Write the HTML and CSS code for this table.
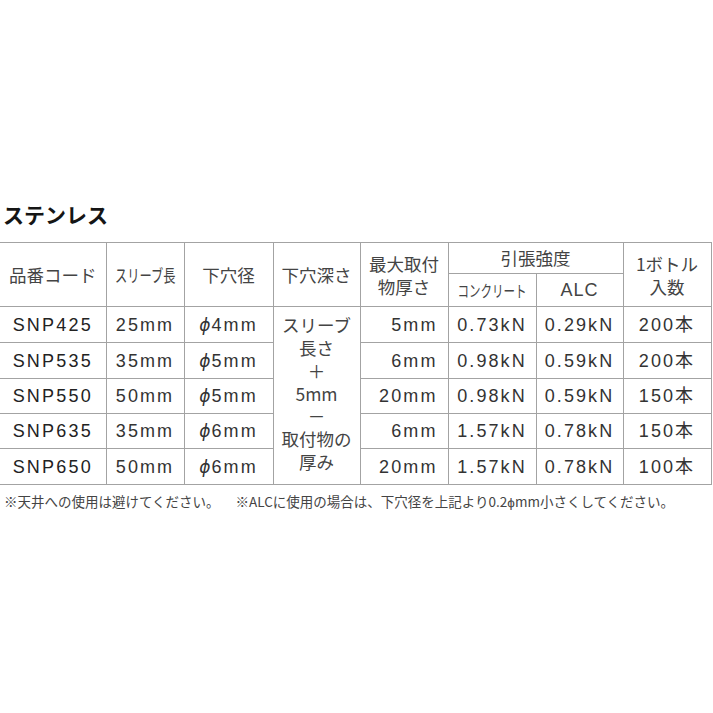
FILE: index.html
```html
<!DOCTYPE html>
<html lang="ja">
<head>
<meta charset="utf-8">
<link rel="stylesheet" href="styles.css">
</head>
<body>
<div class="page">
  <h1 class="title">ステンレス</h1>
  <table class="spec">
    <colgroup>
      <col class="c1"><col class="c2"><col class="c3"><col class="c4"><col class="c5"><col class="c6"><col class="c7"><col class="c8">
    </colgroup>
    <thead>
      <tr class="h1">
        <th rowspan="2" class="first">品番コード</th>
        <th rowspan="2"><span class="narrow">スリーブ長</span></th>
        <th rowspan="2">下穴径</th>
        <th rowspan="2">下穴深さ</th>
        <th rowspan="2" class="two">最大取付<br>物厚さ</th>
        <th colspan="2">引張強度</th>
        <th rowspan="2" class="two">1ボトル<br>入数</th>
      </tr>
      <tr class="h2">
        <th class="sub"><span class="narrow">コンクリート</span></th>
        <th class="sub latin">ALC</th>
      </tr>
    </thead>
    <tbody>
      <tr class="r1">
        <td class="first code">SNP425</td>
        <td>25mm</td>
        <td><span class="phi">ϕ</span>4mm</td>
        <td rowspan="5" class="depth">スリーブ<br>長さ<br>＋<br>5mm<br>－<br>取付物の<br>厚み</td>
        <td class="right">5mm</td>
        <td>0.73kN</td>
        <td>0.29kN</td>
        <td>200本</td>
      </tr>
      <tr class="r2">
        <td class="first code">SNP535</td>
        <td>35mm</td>
        <td><span class="phi">ϕ</span>5mm</td>
        <td class="right">6mm</td>
        <td>0.98kN</td>
        <td>0.59kN</td>
        <td>200本</td>
      </tr>
      <tr class="r3">
        <td class="first code">SNP550</td>
        <td>50mm</td>
        <td><span class="phi">ϕ</span>5mm</td>
        <td class="right">20mm</td>
        <td>0.98kN</td>
        <td>0.59kN</td>
        <td>150本</td>
      </tr>
      <tr class="r4">
        <td class="first code">SNP635</td>
        <td>35mm</td>
        <td><span class="phi">ϕ</span>6mm</td>
        <td class="right">6mm</td>
        <td>1.57kN</td>
        <td>0.78kN</td>
        <td>150本</td>
      </tr>
      <tr class="r5">
        <td class="first code">SNP650</td>
        <td>50mm</td>
        <td><span class="phi">ϕ</span>6mm</td>
        <td class="right">20mm</td>
        <td>1.57kN</td>
        <td>0.78kN</td>
        <td>100本</td>
      </tr>
    </tbody>
  </table>
  <p class="notes"><span class="note">※天井への使用は避けてください。</span><span class="note">※ALCに使用の場合は、下穴径を上記より0.2ϕmm小さくしてください。</span></p>
</div>
</body>
</html>
```
FILE: styles.css
```css
html, body {
  margin: 0;
  padding: 0;
  background: #ffffff;
}
body {
  font-family: "Liberation Sans", "Noto Sans CJK JP", sans-serif;
  color: #333333;
}
.page {
  padding-top: 199px;
}
.title {
  margin: 0 0 13px 3px;
  font-family: "Noto Sans CJK JP", sans-serif;
  font-weight: 700;
  font-size: 21px;
  line-height: 30px;
  height: 30px;
  color: #151515;
  letter-spacing: 0;
}
.spec {
  border-collapse: collapse;
  table-layout: fixed;
  width: 711px;
}
.c1 { width: 106px; }
.c2 { width: 78px; }
.c3 { width: 89px; }
.c4 { width: 87px; }
.c5 { width: 88px; }
.c6 { width: 88px; }
.c7 { width: 87px; }
.c8 { width: 88px; }
.spec th, .spec td {
  border: 1px solid #a3a3a3;
  padding: 0;
  text-align: center;
  vertical-align: middle;
  white-space: nowrap;
  overflow: hidden;
}
.spec .first {
  border-left: none;
}
.spec th {
  font-family: "Noto Sans CJK JP", sans-serif;
  font-weight: 400;
  font-size: 17.5px;
  line-height: 22px;
  color: #444444;
}
.spec th.two {
  line-height: 23px;
}
.spec th.sub {
  font-size: 16px;
}
.spec th.latin {
  font-family: "Liberation Sans", sans-serif;
  font-size: 18px;
  letter-spacing: 1px;
}
.narrow {
  display: inline-block;
  transform: scaleX(0.7);
  transform-origin: center;
  margin: 0 -14px;
}
.sub .narrow {
  transform: scaleX(0.72);
  margin: 0 -13px;
}
.h1 th { height: 30px; }
.h2 th { height: 32px; }
.spec td {
  font-size: 18px;
  letter-spacing: 2.1px;
  line-height: 22px;
  color: #333333;
}
.spec td.code {
  color: #222222;
  letter-spacing: 2.2px;
}
.phi {
  font-family: "DejaVu Sans", sans-serif;
  font-style: italic;
  font-size: 17px;
  letter-spacing: 1px;
}
.spec td.right {
  text-align: right;
  padding-right: 10px;
}
.r1 td { height: 35px; }
.r2 td { height: 35px; }
.r3 td { height: 34px; }
.r4 td { height: 34px; }
.r5 td { height: 35px; }
.spec td.depth {
  font-family: "Noto Sans CJK JP", sans-serif;
  font-size: 17.5px;
  letter-spacing: 0;
  line-height: 22.8px;
  color: #444444;
  padding-bottom: 3px;
}
.notes {
  margin: 6px 0 0 4px;
  font-family: "Noto Sans CJK JP", sans-serif;
  font-size: 13.5px;
  line-height: 20px;
  color: #444444;
  white-space: nowrap;
}
.note + .note {
  margin-left: 16px;
}
```
